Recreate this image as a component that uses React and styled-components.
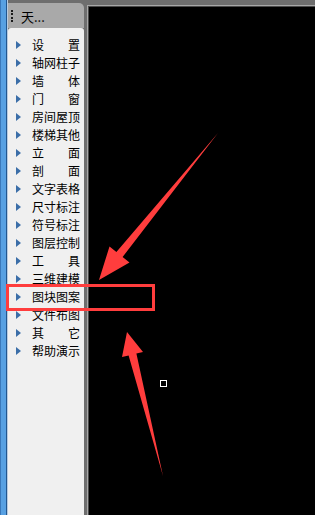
import React from "react";
import styled, { createGlobalStyle } from "styled-components";

const GlobalStyle = createGlobalStyle`
  html, body {
    margin: 0;
    padding: 0;
    background: #000;
  }
  #root {
    width: 315px;
    height: 515px;
  }
`;

const MENU = [
  { label: "设置", spread: true },
  { label: "轴网柱子" },
  { label: "墙体", spread: true },
  { label: "门窗", spread: true },
  { label: "房间屋顶" },
  { label: "楼梯其他" },
  { label: "立面", spread: true },
  { label: "剖面", spread: true },
  { label: "文字表格" },
  { label: "尺寸标注" },
  { label: "符号标注" },
  { label: "图层控制" },
  { label: "工具", spread: true },
  { label: "三维建模" },
  { label: "图块图案" },
  { label: "文件布图" },
  { label: "其它", spread: true },
  { label: "帮助演示" },
];

export default function App() {
  return (
    <>
      <GlobalStyle />
      <Screen>
        <EdgeStrip />
        <Sidebar>
          <TitleBar>
            <Grip />
            <TitleText>天...</TitleText>
          </TitleBar>
          <Panel>
            {MENU.map((item) => (
              <Row key={item.label}>
                <Arrow />
                <Label $spread={item.spread}>
                  {item.spread
                    ? item.label.split("").map((c) => <span key={c}>{c}</span>)
                    : item.label}
                </Label>
              </Row>
            ))}
          </Panel>
        </Sidebar>
        <Splitter />
        <RightPane>
          <Frame>
            <Canvas>
              <Cursor />
            </Canvas>
          </Frame>
        </RightPane>

        {/* 标注：红框与箭头 */}
        <Highlight />
        <Overlay width="315" height="515" viewBox="0 0 315 515">
          <polygon
            fill="#ff3d3d"
            points="218,133 116.4,252 109.5,246.5 99,280 129.5,262.5 122.6,257"
          />
          <polygon
            fill="#ff3d3d"
            points="163,476 128.6,355.5 122,357 127,332 143,352 136.4,353.5"
          />
        </Overlay>
      </Screen>
    </>
  );
}

const Screen = styled.div`
  position: relative;
  display: flex;
  width: 315px;
  height: 515px;
  overflow: hidden;
  background: #000;
`;
const EdgeStrip = styled.div`
  flex-shrink: 0;
  width: 8px;
  height: 100%;
  background: linear-gradient(
    to right,
    #3a78ba 0px,
    #3a78ba 1px,
    #57a0e2 1px,
    #57a0e2 6px,
    #22568e 6px,
    #22568e 7px,
    #b8cbe0 7px
  );
`;
const Sidebar = styled.div`
  display: flex;
  flex-direction: column;
  flex-shrink: 0;
  width: 76px;
  height: 100%;
  background: #6e6e6e;
`;
const TitleBar = styled.div`
  display: flex;
  align-items: center;
  gap: 6px;
  margin-top: 3px;
  padding-left: 3px;
  height: 25px;
  background: #a9a9a9;
  border-top-right-radius: 5px;
`;
const Grip = styled.div`
  width: 2px;
  height: 12px;
  border-left: 2px dotted #1a1a1a;
`;
const TitleText = styled.span`
  font-family: "Noto Sans CJK SC", "Noto Sans", sans-serif;
  font-size: 13px;
  color: #000;
  line-height: 1;
  margin-top: 2px;
`;
const Panel = styled.div`
  flex: 1;
  padding-top: 8px;
  background: #f0f0f0;
  border-radius: 3px 3px 0 0;
`;
const Row = styled.div`
  display: flex;
  align-items: center;
  gap: 11px;
  padding-left: 8px;
  height: 18px;
`;
const Arrow = styled.div`
  flex-shrink: 0;
  width: 0;
  height: 0;
  border-top: 4.5px solid transparent;
  border-bottom: 4.5px solid transparent;
  border-left: 5px solid #3b6ea8;
`;
const Label = styled.div`
  display: flex;
  justify-content: ${(p) => (p.$spread ? "space-between" : "flex-start")};
  width: 48px;
  font-family: "Noto Sans CJK SC", "Noto Sans", sans-serif;
  font-size: 12px;
  line-height: 18px;
  color: #000;
  white-space: nowrap;
`;
const Splitter = styled.div`
  flex-shrink: 0;
  width: 3px;
  height: 100%;
  background: #6e6e6e;
`;
const RightPane = styled.div`
  flex: 1;
  display: flex;
  flex-direction: column;
  padding-top: 5px;
  background: #6e6e6e;
`;
const Frame = styled.div`
  flex: 1;
  display: flex;
  border-top: 1px solid #a8a8a8;
  border-left: 1px solid #a8a8a8;
`;
const Canvas = styled.div`
  position: relative;
  flex: 1;
  background: #000;
  border-top: 1px solid #4a4a4a;
  border-left: 1px solid #4a4a4a;
`;
const Cursor = styled.div`
  position: absolute;
  left: 71px;
  top: 373px;
  width: 5px;
  height: 5px;
  border: 1px solid #fff;
`;
const Highlight = styled.div`
  position: absolute;
  left: 6px;
  top: 284px;
  width: 143px;
  height: 21px;
  border: 3px solid #ff3d3d;
`;
const Overlay = styled.svg`
  position: absolute;
  left: 0;
  top: 0;
  pointer-events: none;
`;
